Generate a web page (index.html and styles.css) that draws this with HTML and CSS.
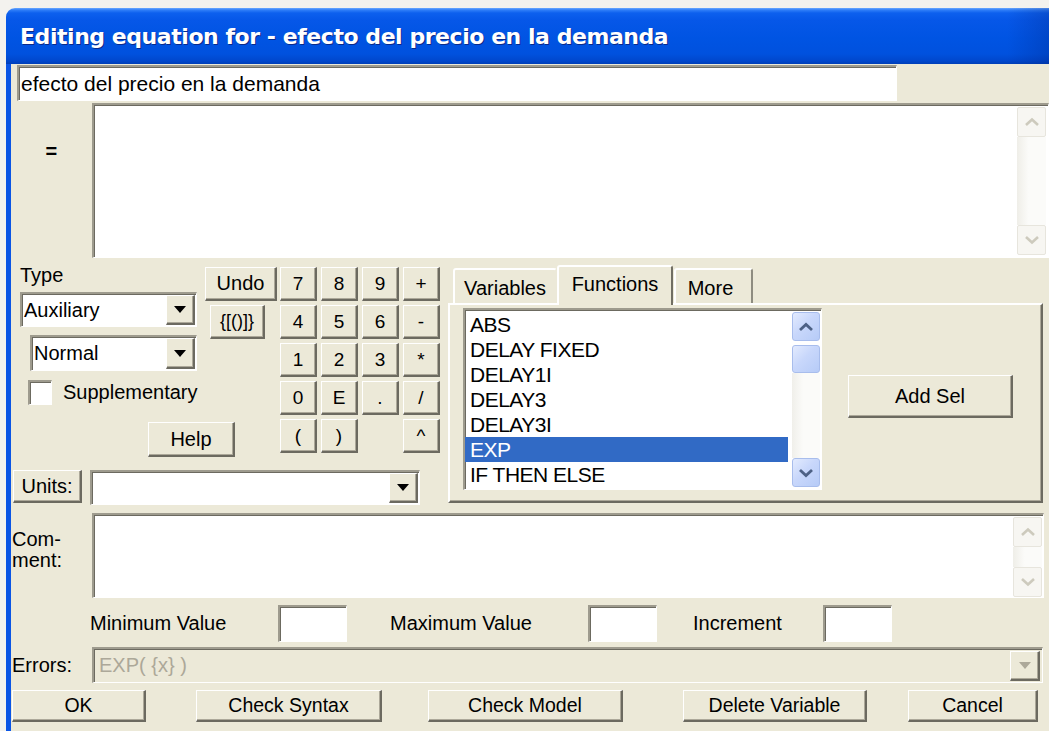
FILE: index.html
```html
<!DOCTYPE html>
<html lang="es">
<head>
<meta charset="utf-8">
<title>Editing equation</title>
<link rel="stylesheet" href="styles.css">
</head>
<body>
<div class="win">
  <div class="titlebar">Editing equation for - efecto del precio en la demanda</div>
  <div class="frame">

    <div class="row-name">
      <div class="field sunken name-field">efecto del precio en la demanda</div>
    </div>

    <div class="row-eq">
      <div class="eq-label">=</div>
      <div class="field sunken eq-box">
        <div class="vscroll vscroll-off">
          <div class="sb-btn"><svg width="16" height="10" viewBox="0 0 16 10"><polyline points="2,8 8,2.5 14,8" fill="none" stroke="#cdcabd" stroke-width="2.6"/></svg></div>
          <div class="sb-track"></div>
          <div class="sb-btn"><svg width="16" height="10" viewBox="0 0 16 10"><polyline points="2,2 8,7.5 14,2" fill="none" stroke="#cdcabd" stroke-width="2.6"/></svg></div>
        </div>
      </div>
    </div>

    <div class="mid">
      <div class="left">
        <div class="calc">
          <div class="type-col">
            <div class="type-label">Type</div>
            <div class="combo sunken combo-aux"><span class="combo-text">Auxiliary</span><span class="drop raised"><i class="tri"></i></span></div>
            <div class="combo sunken combo-normal"><span class="combo-text">Normal</span><span class="drop raised"><i class="tri"></i></span></div>
            <div class="check"><span class="check-box sunken"></span><span class="check-text">Supplementary</span></div>
          </div>
          <div class="btn raised undo">Undo</div>
          <div class="btn raised braces">{[()]}</div>
          <div class="keypad">
            <div class="btn raised key">7</div><div class="btn raised key">8</div><div class="btn raised key">9</div><div class="btn raised key">+</div>
            <div class="btn raised key">4</div><div class="btn raised key">5</div><div class="btn raised key">6</div><div class="btn raised key">-</div>
            <div class="btn raised key">1</div><div class="btn raised key">2</div><div class="btn raised key">3</div><div class="btn raised key">*</div>
            <div class="btn raised key">0</div><div class="btn raised key">E</div><div class="btn raised key">.</div><div class="btn raised key">/</div>
            <div class="btn raised key">(</div><div class="btn raised key">)</div><span></span><div class="btn raised key">^</div>
          </div>
          <div class="btn raised help">Help</div>
        </div>
        <div class="units-row">
          <div class="btn raised units-btn">Units:</div>
          <div class="combo sunken combo-units"><span class="combo-text"></span><span class="drop raised"><i class="tri"></i></span></div>
        </div>
      </div>

      <div class="tabs">
        <div class="tab-strip">
          <div class="tab tab-vars">Variables</div>
          <div class="tab tab-funcs">Functions</div>
          <div class="tab tab-more">More</div>
        </div>
        <div class="tab-panel">
          <div class="listbox sunken">
            <div class="items">
              <div class="item">ABS</div>
              <div class="item">DELAY FIXED</div>
              <div class="item">DELAY1I</div>
              <div class="item">DELAY3</div>
              <div class="item">DELAY3I</div>
              <div class="item selected">EXP</div>
              <div class="item">IF THEN ELSE</div>
            </div>
            <div class="vscroll vscroll-xp">
              <div class="sb-btn"><svg width="16" height="10" viewBox="0 0 16 10"><polyline points="2,8 8,2.5 14,8" fill="none" stroke="#4d6185" stroke-width="2.8"/></svg></div>
              <div class="sb-thumb"></div>
              <div class="sb-track"></div>
              <div class="sb-btn"><svg width="16" height="10" viewBox="0 0 16 10"><polyline points="2,2 8,7.5 14,2" fill="none" stroke="#4d6185" stroke-width="2.8"/></svg></div>
            </div>
          </div>
          <div class="btn raised add-sel">Add Sel</div>
        </div>
      </div>
    </div>

    <div class="row-comment">
      <div class="comment-label">Com-<br>ment:</div>
      <div class="field sunken comment-box">
        <div class="vscroll vscroll-off">
          <div class="sb-btn"><svg width="16" height="10" viewBox="0 0 16 10"><polyline points="2,8 8,2.5 14,8" fill="none" stroke="#cdcabd" stroke-width="2.6"/></svg></div>
          <div class="sb-track"></div>
          <div class="sb-btn"><svg width="16" height="10" viewBox="0 0 16 10"><polyline points="2,2 8,7.5 14,2" fill="none" stroke="#cdcabd" stroke-width="2.6"/></svg></div>
        </div>
      </div>
    </div>

    <div class="row-range">
      <span class="range-label lbl-min">Minimum Value</span>
      <div class="field sunken range-input"></div>
      <span class="range-label lbl-max">Maximum Value</span>
      <div class="field sunken range-input"></div>
      <span class="range-label lbl-inc">Increment</span>
      <div class="field sunken range-input"></div>
    </div>

    <div class="row-errors">
      <div class="errors-label">Errors:</div>
      <div class="sunken errors-field">
        <span class="errors-text">EXP( {x} )</span>
        <span class="drop raised drop-off"><i class="tri tri-off"></i></span>
      </div>
    </div>

    <div class="row-buttons">
      <div class="btn raised b-ok">OK</div>
      <div class="btn raised b-syntax">Check Syntax</div>
      <div class="btn raised b-model">Check Model</div>
      <div class="btn raised b-delete">Delete Variable</div>
      <div class="btn raised b-cancel">Cancel</div>
    </div>

  </div>
</div>
</body>
</html>
```

FILE: styles.css
```css
* { box-sizing: border-box; }

html, body { margin: 0; padding: 0; }

body {
  width: 1049px;
  height: 731px;
  overflow: hidden;
  background: #f3f2ee;
  font-family: "Liberation Sans", Arial, sans-serif;
  font-size: 20px;
  color: #000;
}

/* window chrome */
.win {
  margin: 8px 0 0 6px;
  width: 1043px;
  height: 723px;
  display: flex;
  flex-direction: column;
}

.titlebar {
  flex: none;
  height: 56px;
  border-top-left-radius: 9px;
  background:
    linear-gradient(90deg, rgba(0, 0, 0, 0) 96%, rgba(0, 30, 120, 0.25) 100%),
    linear-gradient(180deg, #6aa8ff 0px, #2f7ef8 2px, #0d60ee 5px, #0657e8 12px, #0054e3 30px, #0051de 46px, #0047cc 53px, #003fb8 56px);
  display: flex;
  align-items: center;
  padding-left: 14px;
  font-family: "DejaVu Sans", sans-serif;
  font-weight: bold;
  font-size: 22px;
  letter-spacing: -0.45px;
  color: #fff;
  text-shadow: 1px 1px 0 #0b2a8a;
  white-space: nowrap;
}

.frame {
  flex: 1;
  background: #ece9d8;
  border-left: 5px solid #0a55e5;
  display: flex;
  flex-direction: column;
  overflow: hidden;
}

/* 3D borders */
.sunken {
  border-style: solid;
  border-width: 2px 1px 1px 2px;
  border-color: #9e9b8e #ffffff #ffffff #9e9b8e;
  box-shadow: inset 1px 1px 0 #6c6a60;
}

.raised {
  border-style: solid;
  border-width: 1px 2px 2px 1px;
  border-color: #ffffff #6c6a60 #6c6a60 #ffffff;
  box-shadow: inset -1px -1px 0 #aca899;
  background: #ece9d8;
}

.field { background: #fff; }

.btn {
  display: flex;
  align-items: center;
  justify-content: center;
  white-space: nowrap;
}

/* name row */
.row-name {
  flex: none;
  height: 37px;
  padding: 1px 0 0 6px;
}

.name-field {
  width: 880px;
  height: 36px;
  display: flex;
  align-items: center;
  padding: 1px 0 0 2px;
  font-size: 21px;
}

/* equation row */
.row-eq {
  flex: none;
  display: flex;
  height: 155px;
  margin-top: 2px;
}

.eq-label {
  width: 81px;
  text-align: center;
  padding-top: 38px;
  font-weight: bold;
  line-height: 20px;
}

.eq-box {
  width: 958px;
  height: 155px;
  display: flex;
  justify-content: flex-end;
  padding: 2px 2px 2px 0;
}

/* scrollbars */
.vscroll {
  display: flex;
  flex-direction: column;
}

.vscroll-off { width: 29px; }

.vscroll-off .sb-btn {
  height: 30px;
  flex: none;
  background: #f7f6f2;
  border: 1px solid #e7e5dd;
  border-radius: 2px;
  display: flex;
  align-items: center;
  justify-content: center;
}

.vscroll-off .sb-track {
  flex: 1;
  background: linear-gradient(90deg, #efeee8, #fbfbf9 40%);
}

.vscroll-xp {
  width: 28px;
  height: 175px;
  margin-left: 4px;
}

.vscroll-xp .sb-btn,
.vscroll-xp .sb-thumb {
  flex: none;
  background: linear-gradient(135deg, #e3ebfe 0%, #c8d7fb 45%, #b6cbf7 100%);
  border: 1px solid #a8bdec;
  border-radius: 3px;
}

.vscroll-xp .sb-btn {
  height: 29px;
  display: flex;
  align-items: center;
  justify-content: center;
}

.vscroll-xp .sb-thumb {
  height: 28px;
  margin-top: 4px;
}

.vscroll-xp .sb-track {
  flex: 1;
  background: linear-gradient(90deg, #f0efea, #fbfbf9 40%);
}

/* middle section */
.mid {
  flex: none;
  display: flex;
  height: 250px;
}

.left {
  width: 437px;
  display: flex;
  flex-direction: column;
}

.calc {
  margin-top: 9px;
  display: grid;
  grid-template-columns: 193px 76px 160px;
  grid-template-rows: repeat(5, 34px);
  row-gap: 4px;
}

.type-col {
  grid-column: 1;
  grid-row: 1 / 5;
  display: flex;
  flex-direction: column;
  align-items: flex-start;
}

.type-label {
  margin: -2px 0 0 9px;
  line-height: 20px;
}

.combo {
  display: flex;
  align-items: stretch;
  background: #fff;
}

.combo-text {
  flex: 1;
  display: flex;
  align-items: center;
  padding-left: 2px;
  white-space: nowrap;
}

.drop {
  width: 29px;
  flex: none;
  display: flex;
  align-items: center;
  justify-content: center;
  margin: 1px 1px 1px 0;
}

.tri {
  display: block;
  width: 0;
  height: 0;
  border-left: 6px solid transparent;
  border-right: 6px solid transparent;
  border-top: 7px solid #000;
}

.combo-aux {
  margin: 7px 0 0 9px;
  width: 177px;
  height: 35px;
}

.combo-normal {
  margin: 8px 0 0 19px;
  width: 167px;
  height: 36px;
}

.check {
  margin: 9px 0 0 17px;
  display: flex;
  align-items: center;
}

.check-box {
  width: 24px;
  height: 25px;
  background: #fff;
}

.check-text { margin-left: 11px; }

.undo {
  grid-column: 2;
  grid-row: 1;
  margin-left: 1px;
  width: 72px;
}

.braces {
  grid-column: 2;
  grid-row: 2;
  margin-left: 6px;
  width: 55px;
  font-size: 18px;
}

.keypad {
  grid-column: 3;
  grid-row: 1 / 6;
  display: grid;
  grid-template-columns: repeat(4, 37px);
  grid-template-rows: repeat(5, 34px);
  gap: 4px;
}

.key { font-size: 19px; }

.help {
  grid-column: 1 / 3;
  grid-row: 5;
  align-self: start;
  margin: 3px 0 0 137px;
  width: 87px;
  height: 35px;
}

.units-row {
  margin-top: 17px;
  display: flex;
  align-items: flex-start;
}

.units-btn {
  margin-left: 2px;
  width: 69px;
  height: 33px;
}

.combo-units {
  margin-left: 8px;
  width: 330px;
  height: 35px;
}

/* tabs */
.tabs {
  width: 595px;
  display: flex;
  flex-direction: column;
}

.tab-strip {
  margin-top: 7px;
  height: 38px;
  display: flex;
  align-items: flex-end;
  padding-left: 5px;
  position: relative;
  z-index: 1;
}

.tab {
  height: 35px;
  display: flex;
  align-items: center;
  justify-content: center;
  background: #ece9d8;
  border-style: solid;
  border-width: 2px 2px 0 2px;
  border-color: #ffffff #8e8c80 transparent #ffffff;
  border-radius: 3px 3px 0 0;
  white-space: nowrap;
}

.tab-vars {
  width: 104px;
  border-right-color: transparent;
  padding-top: 3px;
}

.tab-funcs {
  width: 116px;
  height: 40px;
  margin-bottom: -2px;
  padding-bottom: 4px;
  border-right-color: #716f64;
}

.tab-more {
  width: 79px;
  margin-left: 1px;
  padding-top: 3px;
  padding-right: 6px;
}

.tab-panel {
  width: 595px;
  height: 200px;
  border-style: solid;
  border-width: 2px;
  border-color: #ffffff #6c6a60 #6c6a60 #ffffff;
  box-shadow: inset -1px -1px 0 #aca899;
  display: flex;
  align-items: flex-start;
  padding: 3px 0 0 13px;
}

.listbox {
  width: 359px;
  height: 182px;
  background: #fff;
  display: flex;
  padding: 2px 1px 0 0;
}

.items {
  width: 323px;
  display: flex;
  flex-direction: column;
}

.item {
  height: 25px;
  line-height: 25px;
  padding-left: 5px;
  font-size: 21px;
  letter-spacing: -0.5px;
  white-space: nowrap;
}

.item.selected {
  background: #316ac5;
  color: #fff;
}

.add-sel {
  margin: 67px 0 0 26px;
  width: 165px;
  height: 43px;
}

/* comment row */
.row-comment {
  flex: none;
  display: flex;
  height: 85px;
  margin-top: 5px;
}

.comment-label {
  width: 81px;
  padding: 16px 0 0 1px;
  line-height: 21px;
}

.comment-box {
  width: 952px;
  height: 85px;
  display: flex;
  justify-content: flex-end;
  padding: 2px 1px 0 0;
}

/* min / max / increment */
.row-range {
  flex: none;
  display: flex;
  align-items: center;
  height: 37px;
  margin-top: 7px;
}

.range-label { white-space: nowrap; }

.lbl-min { margin-left: 79px; width: 188px; }
.lbl-max { margin-left: 43px; width: 198px; }
.lbl-inc { margin-left: 36px; width: 130px; }

.range-input {
  width: 69px;
  height: 37px;
}

/* errors */
.row-errors {
  flex: none;
  display: flex;
  align-items: center;
  height: 36px;
  margin-top: 5px;
}

.errors-label {
  width: 81px;
  padding-left: 1px;
}

.errors-field {
  width: 951px;
  height: 36px;
  background: #ece9d8;
  display: flex;
  align-items: center;
  padding: 1px 2px 1px 0;
}

.errors-text {
  flex: 1;
  padding-left: 5px;
  color: #aca899;
}

.drop-off {
  width: 30px;
  height: 30px;
  margin: 0;
}

.tri-off { border-top-color: #aca899; }

/* bottom buttons */
.row-buttons {
  flex: none;
  display: flex;
  height: 32px;
  margin-top: 7px;
  font-size: 19.5px;
}

.row-buttons .btn { height: 32px; }

.b-ok { margin-left: 1px; width: 134px; }
.b-syntax { margin-left: 50px; width: 186px; }
.b-model { margin-left: 46px; width: 195px; }
.b-delete { margin-left: 60px; width: 184px; }
.b-cancel { margin-left: 41px; width: 130px; }
```
